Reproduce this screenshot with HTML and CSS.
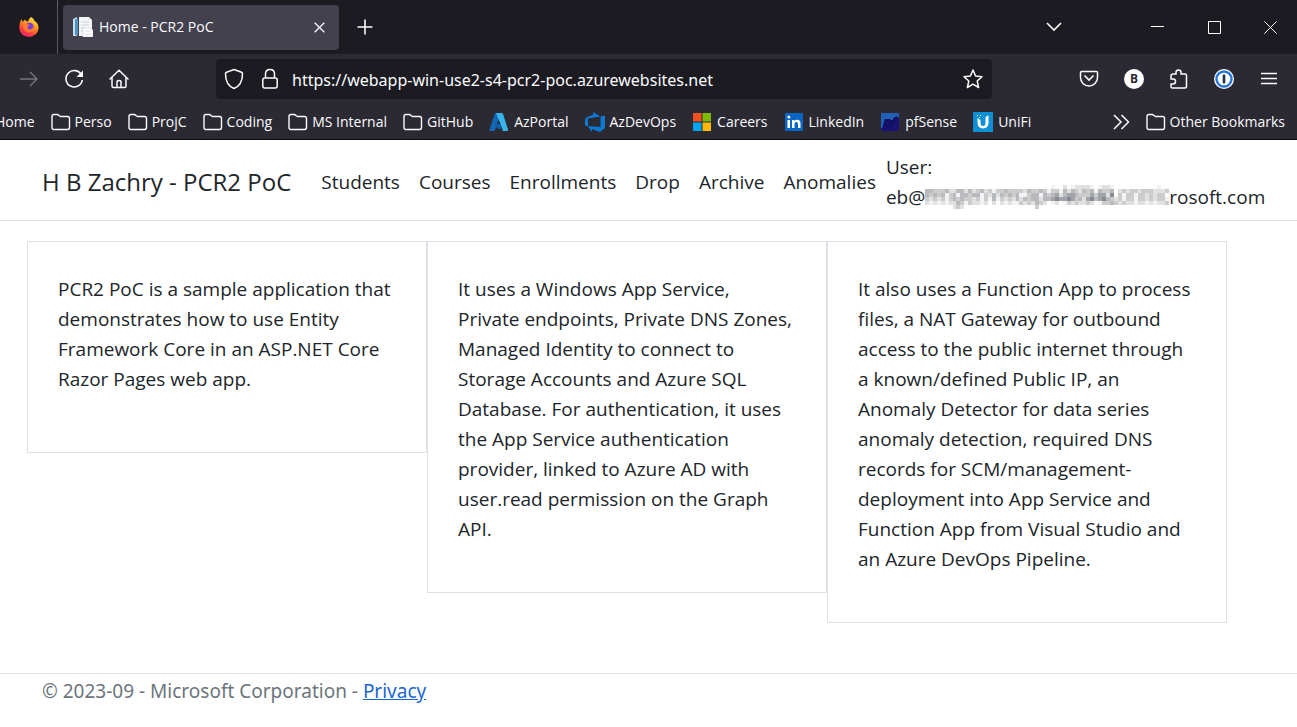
FILE: index.html
```html
<!DOCTYPE html>
<html lang="en">
<head>
<meta charset="utf-8">
<meta name="viewport" content="width=device-width, initial-scale=1">
<title>Home - PCR2 PoC</title>
<link rel="stylesheet" href="styles.css">
<script src="mosaic.js" defer></script>
</head>
<body>
<svg class="defs" aria-hidden="true">
  <symbol id="folder" viewBox="0 0 20 20"><path d="M1 15.500V4.500Q1 2.500 3 2.500H6Q7 2.500 8 3.500L9.500 4.500H16.500Q18.500 4.500 18.500 6.500V15.500Q18.500 17.500 16.500 17.500H3Q1 17.500 1 15.500Z" fill="none" stroke="currentColor" stroke-width="1.400"/></symbol>
</svg>

<div class="browser">
  <div class="tabstrip">
    <button class="icon-btn firefox" aria-label="Firefox View">
      <svg width="20" height="20" viewBox="0 0 20 20">
        <defs><linearGradient id="fx" x1=".8" y1="0" x2=".3" y2="1"><stop offset="0" stop-color="#fff04a"/><stop offset=".4" stop-color="#ff9a1f"/><stop offset=".7" stop-color="#ff4a38"/><stop offset="1" stop-color="#e61c76"/></linearGradient></defs>
        <path d="M12 0Q15 1.500 15.500 4L17 5Q19.700 7 19.500 11.500Q18.500 19 10.500 20Q1 19.500 0.300 11Q0 6 2.500 2L3.500 5L6 2.500Q6.500 4.500 9 4.500Q9.500 2 12 0Z" fill="url(#fx)"/>
        <circle cx="10.500" cy="10" r="4.300" fill="#7a3fd0"/>
        <path d="M4 8Q7 6 9.500 7.500Q11 8.500 8.500 9.500Q8 12 10.500 12.500Q14 12.500 14 9Q16 12 13.500 14.500Q8 17 5 12Z" fill="#ff7a2c"/>
      </svg>
    </button>
    <div class="tab">
      <svg width="20" height="20" viewBox="0 0 20 20">
        <path d="M0 2L4 0V19H0Z" fill="#c5dfef"/><path d="M2 2H5V18H2Z" fill="#4d96c4"/>
        <path d="M6 0H16L19 3V19H6Z" fill="#f3f5f7"/><path d="M8 5H16M8 8H16M8 11H11M8 14H10" stroke="#cdd3d8"/>
        <path d="M10 11H17L20 13V20H10Z" fill="#fff" stroke="#c4ccd2" stroke-width=".6"/><path d="M12 14H18M12 17H18" stroke="#d3d9de"/>
      </svg>
      <span class="tab-title">Home - PCR2 PoC</span>
      <button class="icon-btn small" aria-label="Close tab"><svg width="11" height="11" viewBox="0 0 11 11"><path d="M.7.700L10.300 10.300M10.300.700L.700 10.300" stroke="currentColor" stroke-width="1.300"/></svg></button>
    </div>
    <button class="icon-btn newtab" aria-label="New tab"><svg width="16" height="16" viewBox="0 0 16 16"><path d="M8 .5V15.500M.5 8H15.500" stroke="currentColor" stroke-width="1.600"/></svg></button>
    <div class="window-controls">
      <button class="icon-btn list" aria-label="List all tabs"><svg width="16" height="10" viewBox="0 0 16 10"><path d="M1 1L8 8L15 1" fill="none" stroke="currentColor" stroke-width="1.600"/></svg></button>
      <button class="icon-btn" aria-label="Minimize"><svg width="13" height="13" viewBox="0 0 13 13"><path d="M0 5.500H13" stroke="currentColor"/></svg></button>
      <button class="icon-btn" aria-label="Maximize"><svg width="13" height="13" viewBox="0 0 13 13"><path d="M.5.500H12.500V12.500H.5Z" fill="none" stroke="currentColor"/></svg></button>
      <button class="icon-btn" aria-label="Close"><svg width="13" height="13" viewBox="0 0 13 13"><path d="M.3.300L12.700 12.700M12.700.300L.3 12.700" stroke="currentColor"/></svg></button>
    </div>
  </div>

  <div class="toolbar">
    <div class="nav-buttons">
      <button class="icon-btn dim" aria-label="Forward" disabled><svg width="20" height="20" viewBox="0 0 20 20"><path d="M1 10H18M11 3L18 10L11 17" fill="none" stroke="currentColor" stroke-width="1.400"/></svg></button>
      <button class="icon-btn" aria-label="Reload"><svg width="20" height="20" viewBox="0 0 20 20"><path d="M17.500 6A8.200 8.200 0 1 0 18.300 11" fill="none" stroke="currentColor" stroke-width="1.600"/><path d="M19 1.500V8H12.500Z" fill="currentColor"/></svg></button>
      <button class="icon-btn" aria-label="Home"><svg width="20" height="20" viewBox="0 0 20 20"><path d="M1 10L10 1.300L19 10M3 8.500V17Q3 18.500 4.500 18.500H15.500Q17 18.500 17 17V8.500M8 18.500V13Q8 11.500 10 11.500Q12 11.500 12 13V18.500" fill="none" stroke="currentColor" stroke-width="1.500" stroke-linecap="round" stroke-linejoin="round"/></svg></button>
    </div>
    <div class="urlbar">
      <svg width="20" height="22" viewBox="0 0 20 22"><path d="M10 1.500L17.500 4.300Q18.500 4.700 18.500 5.700C18.500 12 16 18 10 20.500C4 18 1.500 12 1.500 5.700Q1.500 4.700 2.500 4.300Z" fill="none" stroke="currentColor" stroke-width="1.500"/></svg>
      <svg class="lock" width="16" height="22" viewBox="0 0 16 22"><path d="M3.500 10V6Q3.500 1.500 8 1.500Q12.500 1.500 12.500 6V10" fill="none" stroke="currentColor" stroke-width="1.500"/><rect x=".8" y="10" width="14.400" height="10" rx="2" fill="none" stroke="currentColor" stroke-width="1.500"/></svg>
      <input class="url" aria-label="Address" value="https://webapp-win-use2-s4-pcr2-poc.azurewebsites.net">
      <button class="icon-btn" aria-label="Bookmark this page"><svg width="22" height="22" viewBox="0 0 22 22"><path d="M11 2L13.600 8L20 8.700L15.200 13L16.600 19.500L11 16.200L5.400 19.500L6.800 13L2 8.700L8.400 8Z" fill="none" stroke="currentColor" stroke-width="1.500" stroke-linejoin="round"/></svg></button>
    </div>
    <div class="actions">
      <button class="icon-btn" aria-label="Save to Pocket"><svg width="20" height="20" viewBox="0 0 20 20"><path d="M2.500 2.500H17.500Q18.500 2.500 18.500 3.500V8.500A8.500 8.500 0 0 1 1.500 8.500V3.500Q1.500 2.500 2.500 2.500Z" fill="none" stroke="currentColor" stroke-width="1.500"/><path d="M6 7L10 11L14 7" fill="none" stroke="currentColor" stroke-width="1.700" stroke-linecap="round"/></svg></button>
      <button class="icon-btn badge-b" aria-label="Account B">B</button>
      <button class="icon-btn" aria-label="Extensions"><svg width="20" height="20" viewBox="0 0 20 20"><path d="M2 10V7Q2 5 4 5H7V3.500Q7 1 9.500 1Q12 1 12 3.500V5H16Q17.500 5 17.500 6.500V17.500Q17.500 19 16 19H3.500Q2 19 2 17.500V15H4Q6.500 15 6.500 12.500Q6.500 10 4 10Z" fill="none" stroke="currentColor" stroke-width="1.500"/></svg></button>
      <button class="icon-btn" aria-label="1Password"><svg width="20" height="20" viewBox="0 0 20 20"><circle cx="10" cy="10" r="10" fill="#fff"/><circle cx="10" cy="10" r="7.500" fill="#fff" stroke="#2878dc" stroke-width="2.400"/><rect x="8.700" y="5.500" width="2.600" height="9" rx="1" fill="#25303c"/></svg></button>
      <button class="icon-btn small" aria-label="Menu"><svg width="16" height="14" viewBox="0 0 16 14"><path d="M0 1.500H16M0 6.500H16M0 11.500H16" stroke="currentColor" stroke-width="1.400"/></svg></button>
    </div>
  </div>

  <nav class="bookmarks" aria-label="Bookmarks">
    <a href="#">Home</a>
    <a href="#"><svg width="20" height="20"><use href="#folder"/></svg>Perso</a>
    <a href="#"><svg width="20" height="20"><use href="#folder"/></svg>ProjC</a>
    <a href="#"><svg width="20" height="20"><use href="#folder"/></svg>Coding</a>
    <a href="#"><svg width="20" height="20"><use href="#folder"/></svg>MS Internal</a>
    <a href="#"><svg width="20" height="20"><use href="#folder"/></svg>GitHub</a>
    <a class="site" href="#"><svg width="20" height="20" viewBox="0 0 20 20"><path d="M6 1H12L6 18Q5.500 19 4.500 19H1.500Q0 19 .5 17.500Z" fill="#1467b3"/><path d="M5 12H14L12 17H9Z" fill="#0b5fa8"/><path d="M7 1H12.500Q13.500 1 14 2L19 17.500Q19.500 19 18 19H13Q14 18.500 13.500 17Z" fill="#39b5ea"/></svg>AzPortal</a>
    <a class="site" href="#"><svg width="20" height="20" viewBox="0 0 20 20"><path d="M20 3.500V16L15 20L7 17V20L2.500 14L15.500 15V4.500ZM15.500 4.500L8 0V3L2 5L0 7.500V13.500L3 14.500V6.500Z" fill="#0b78d4"/></svg>AzDevOps</a>
    <a class="site" href="#"><svg width="20" height="20" viewBox="0 0 20 20"><path d="M1 1H9.500V9.500H1Z" fill="#f25022"/><path d="M10.500 1H19V9.500H10.500Z" fill="#7fba00"/><path d="M1 10.500H9.500V19H1Z" fill="#00a4ef"/><path d="M10.500 10.500H19V19H10.500Z" fill="#ffb900"/></svg>Careers</a>
    <a class="site" href="#"><svg width="20" height="20" viewBox="0 0 20 20"><rect x="1" y="1" width="18" height="18" rx="1" fill="#0a66c2"/><path d="M3.500 8H6V16H3.500ZM8 8H10.500V9.200Q11.500 7.800 13.300 7.800Q16.500 7.800 16.500 11.500V16H14V12Q14 10 12.300 10Q10.500 10 10.500 12V16H8Z" fill="#fff"/><circle cx="4.800" cy="5" r="1.500" fill="#fff"/></svg>LinkedIn</a>
    <a class="site" href="#"><svg width="20" height="20" viewBox="0 0 20 20"><rect x="1" y="1" width="18" height="18" rx="1" fill="#1c1275"/><path d="M1 1H19V6Q14 5 13 8L8 8Q5 8 4 12L3 16H1Z" fill="#2061b5"/><path d="M3 17L5.500 8H9Q11 8 10.500 10.500Q10 14 6 14M11 17L14 7Q15 5 18 5.500M11.500 9.500H16" fill="none" stroke="#10105c" stroke-width="1.800"/></svg>pfSense</a>
    <a class="site" href="#"><svg width="20" height="20" viewBox="0 0 20 20"><rect width="20" height="20" fill="#1090d4"/><path d="M4.500 6V10Q4.500 16.500 10 16.500Q15.500 16.500 15.500 10V3.500Q12.500 4 12.500 6V11Q12.500 14 10 14Q7.500 14 7.500 11V8Z" fill="#fff"/><path d="M4 3H5V4H4ZM6 5H7V6H6ZM7 3H8V4H7Z" fill="#fff"/></svg>UniFi</a>
    <div class="bookmarks-end">
      <button class="icon-btn" aria-label="More bookmarks"><svg width="18" height="16" viewBox="0 0 18 16"><path d="M2 1L9 8L2 15M9.500 1L16.500 8L9.500 15" fill="none" stroke="currentColor" stroke-width="1.500"/></svg></button>
      <a href="#"><svg width="20" height="20"><use href="#folder"/></svg>Other Bookmarks</a>
    </div>
  </nav>
</div>

<header class="site-header">
  <a class="brand" href="#">H B Zachry - PCR2 PoC</a>
  <nav class="site-nav" aria-label="Main">
    <a href="#">Students</a><a href="#">Courses</a><a href="#">Enrollments</a><a href="#">Drop</a><a href="#">Archive</a><a href="#">Anomalies</a>
  </nav>
  <div class="user">User:<br><span class="mail">eb@<svg class="redacted" viewBox="0 0 248 24" preserveAspectRatio="none" role="img" aria-label="redacted"></svg>rosoft.com</span></div>
</header>

<main class="cards">
  <section class="card"><p>PCR2 PoC is a sample application that demonstrates how to use Entity Framework Core in an ASP.NET Core Razor Pages web app.</p></section>
  <section class="card"><p>It uses a Windows App Service, Private endpoints, Private DNS Zones, Managed Identity to connect to Storage Accounts and Azure SQL Database. For authentication, it uses the App Service authentication provider, linked to Azure AD with user.read permission on the Graph API.</p></section>
  <section class="card"><p>It also uses a Function App to process files, a NAT Gateway for outbound access to the public internet through a known/defined Public IP, an Anomaly Detector for data series anomaly detection, required DNS records for SCM/management-deployment into App Service and Function App from Visual Studio and an Azure DevOps Pipeline.</p></section>
</main>

<footer class="site-footer">© 2023-09 - Microsoft Corporation - <a href="#">Privacy</a></footer>
</body>
</html>
```

FILE: mosaic.js
```js
// Grey level of each 4px cell of the redacted part of the address, 0 = empty.
const rows = [
  "0000000000000000000000000000000 010 020 122 221 012 21 0 000 000 0000 1 00",
  "4433 342 244 242 342 313 3433 33 243 343 133 142 432 434 143 34 0 232 332 3332 2 23",
  "4343 413 414 434 413 242 4343 41 134 414 345 245 543 335 355 26 0 313 313 3232 3 30",
  "3232 313 434 332 313 141 3232 42 434 424 456 556 534 256 456 43 2 313 313 3232 3 31",
  "2121 212 243 132 212 020 2121 13 232 432 012 013 232 232 013 34 3 232 212 2121 2 23",
  "0000 000 232 000 000 000 0000 00 000 300"
];
const shades = ["", "#f1f2f4", "#e0e2e2", "#cccccd", "#b9babd", "#a2a4a9", "#868b96"];
const svg = document.querySelector(".redacted");
rows.forEach((row, y) => {
  [...row.replace(/ /g, "")].forEach((level, x) => {
    if (level === "0") return;
    const cell = document.createElementNS("http://www.w3.org/2000/svg", "rect");
    cell.setAttribute("x", x * 4);
    cell.setAttribute("y", y * 4);
    cell.setAttribute("width", 4);
    cell.setAttribute("height", 4);
    cell.setAttribute("fill", shades[level]);
    svg.append(cell);
  });
});
```

FILE: styles.css
```css
* { box-sizing: border-box; }
body {
  margin: 0;
  min-height: 100vh;
  display: flex;
  flex-direction: column;
  background: #fff;
  color: #212529;
  font: 19px/30px "Open Sans", "Noto Sans", sans-serif;
}
a { color: inherit; text-decoration: none; }
svg { display: block; flex: none; }
.defs { position: absolute; width: 0; height: 0; }

.browser { background: #2b2a33; color: #fbfbfe; font-size: 14px; line-height: 20px; border-bottom: 1px solid #0c0c0d; overflow: hidden; }
.icon-btn {
  display: flex; align-items: center; justify-content: center; flex: none;
  padding: 0; border: 0; background: none; color: inherit; font: inherit;
}
.tabstrip { display: flex; align-items: center; height: 54px; background: #1c1b22; }
.firefox { width: 58px; height: 54px; border-right: 1px solid #5b5a63; }
.tab {
  display: flex; align-items: center; gap: 6px; width: 276px; height: 45px;
  margin-left: 5px; padding: 0 10px; border-radius: 4px; background: #42414d;
}
.tab-title { flex: 1; }
.small { width: 20px; height: 20px; }
.newtab { width: 52px; height: 40px; }
.window-controls { display: flex; margin-left: auto; }
.window-controls .icon-btn { width: 57px; height: 54px; }
.window-controls .list { margin-right: 47px; }
.window-controls .icon-btn:last-child { width: 54px; }

.toolbar { display: flex; align-items: center; height: 50px; padding: 0 18px 0 19px; }
.nav-buttons { display: flex; gap: 25px; }
.dim { color: #77767f; }
.urlbar {
  display: flex; align-items: center; flex: 1; max-width: 776px; height: 40px;
  margin-left: 87px; padding: 0 8px; border-radius: 4px; background: #1c1b22;
}
.lock { margin-left: 18px; }
.url { flex: 1; min-width: 0; margin-left: 14px; padding: 2px 0 0; border: 0; outline: 0; background: none; color: inherit; font: 16px/24px "Noto Sans", "Open Sans", sans-serif; }
.actions { display: flex; align-items: center; gap: 25px; margin-left: auto; }
.badge-b { width: 20px; height: 20px; border-radius: 50%; background: #fff; color: #2b2a33; font-size: 12px; font-weight: 700; }

.bookmarks { display: flex; align-items: center; gap: 16px; height: 35px; padding-right: 12px; white-space: nowrap; }
.bookmarks a { display: flex; align-items: center; gap: 4px; }
.bookmarks .site { gap: 5px; }
.bookmarks > a:first-child { margin-left: -5px; }
.bookmarks-end { display: flex; align-items: center; gap: 16px; margin-left: auto; }

.site-header {
  display: flex; align-items: center; height: 81px; padding: 4px 32px 0 42px;
  border-bottom: 1px solid #dee2e6;
}
.brand { font-size: 24px; white-space: nowrap; }
.site-nav { display: flex; gap: 19px; margin-left: 30px; }
.user { margin-left: 10px; }
.mail { display: flex; align-items: center; }
.redacted { width: 244px; height: 24px; shape-rendering: crispEdges; }

.cards { display: flex; align-items: flex-start; padding: 20px 70px 50px 27px; }
.card { flex: 1; min-height: 212px; padding: 32px 32px 28px 30px; border: 1px solid #dee2e6; }
.card p { margin: 0 0 20px; }

.site-footer { padding: 2px 42px; border-top: 1px solid #dee2e6; color: #6c757d; font-family: "Noto Sans", "Open Sans", sans-serif; }
.site-footer a { color: #1b66d2; text-decoration: underline; }
```
